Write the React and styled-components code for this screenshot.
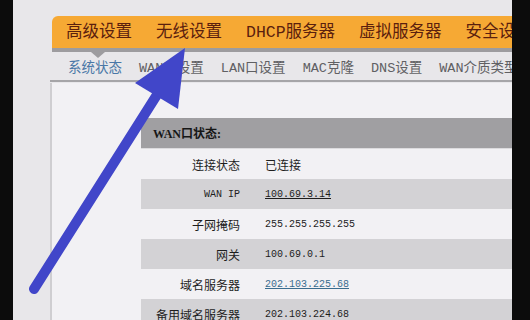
import React from "react";
import styled, { createGlobalStyle } from "styled-components";

const GlobalStyle = createGlobalStyle`
  html, body {
    margin: 0;
    padding: 0;
    background: #0c0c0c;
  }
  body {
    font-family: "Noto Sans CJK SC", "Liberation Sans", sans-serif;
  }
`;

const MONO = `"Liberation Mono", "Noto Sans CJK SC", monospace`;

const Screen = styled.div`
  position: relative;
  display: flex;
  width: 530px;
  height: 320px;
  overflow: hidden;
  background: #0c0c0c;
`;

const Bezel = styled.div`
  width: ${(p) => p.$w}px;
  flex: none;
  background: #0c0c0c;
`;

const Shell = styled.div`
  flex: 1;
  display: flex;
  flex-direction: column;
  padding: 16px 0 0 37px;
  background: #e8e7ea;
  min-width: 0;
  overflow: hidden;
`;

const NavBar = styled.div`
  flex: none;
  display: flex;
  align-items: center;
  gap: 24px;
  height: 32px;
  margin-left: 2px;
  padding-left: 14px;
  background: #f6a934;
  border-top-left-radius: 6px;
  border-bottom: 4px solid #9d9c9f;
  white-space: nowrap;
  overflow: hidden;
`;

const NavItem = styled.div`
  font-family: ${MONO};
  font-size: 16.5px;
  line-height: 32px;
  padding-top: 2px;
  color: #5a200e;
`;

const SubNav = styled.div`
  flex: none;
  position: relative;
  display: flex;
  align-items: flex-end;
  gap: 17px;
  height: 28px;
  padding-left: 18px;
  border-bottom: 2px solid #a6a5a8;
  white-space: nowrap;
  overflow: hidden;
`;

const Pointer = styled.div`
  position: absolute;
  top: 0;
  left: 41px;
  width: 0;
  height: 0;
  border-left: 7px solid transparent;
  border-right: 7px solid transparent;
  border-top: 6px solid #9d9c9f;
`;

const SubItem = styled.div`
  font-family: ${MONO};
  font-size: 13.5px;
  line-height: 20px;
  padding-bottom: 1px;
  color: ${(p) => (p.$active ? "#4a77a6" : "#606063")};
`;

const Panel = styled.div`
  flex: 1;
  margin-top: 1px;
  padding: 35px 0 0 89px;
  background: #f2f1f4;
  border-left: 2px solid #cfced1;
`;

const Table = styled.div`
  display: grid;
  grid-template-columns: 124px 1fr;
`;

const Header = styled.div`
  grid-column: 1 / 3;
  height: 30px;
  display: flex;
  align-items: center;
  padding-left: 12px;
  background: #a09fa2;
  border-bottom: 1px solid #dcdbde;
  font-family: "Liberation Serif", "Noto Sans CJK SC", serif;
  font-size: 12px;
  font-weight: 700;
  color: #161616;
`;

const Cell = styled.div`
  height: 30px;
  display: flex;
  align-items: center;
  justify-content: ${(p) => (p.$label ? "flex-end" : "flex-start")};
  padding-right: ${(p) => (p.$label ? "25px" : "0")};
  background: ${(p) => (p.$dark ? "#d3d2d5" : "#f2f1f4")};
  font-family: ${(p) => (p.$mono ? MONO : `"Noto Sans CJK SC", sans-serif`)};
  font-size: ${(p) => (p.$mono ? "10px" : "12px")};
  color: #1d1d1d;
  white-space: nowrap;
`;

const Link = styled.span`
  text-decoration: underline;
  color: ${(p) => (p.$blue ? "#3a6d8f" : "#1d1d1d")};
`;

const Arrow = styled.svg`
  position: absolute;
  left: 0;
  top: 0;
  pointer-events: none;
`;

const navItems = ["高级设置", "无线设置", "DHCP服务器", "虚拟服务器", "安全设置"];
const subItems = ["系统状态", "WAN口设置", "LAN口设置", "MAC克隆", "DNS设置", "WAN介质类型"];

const rows = [
  { label: "连接状态", value: "已连接" },
  { label: "WAN IP", value: "100.69.3.14", monoLabel: true, link: "dark" },
  { label: "子网掩码", value: "255.255.255.255" },
  { label: "网关", value: "100.69.0.1" },
  { label: "域名服务器", value: "202.103.225.68", link: "blue" },
  { label: "备用域名服务器", value: "202.103.224.68" }
];

export default function App() {
  return (
    <>
      <GlobalStyle />
      <Screen>
        <Bezel $w={13} />
        <Shell>
          <NavBar>
            {navItems.map((item) => (
              <NavItem key={item}>{item}</NavItem>
            ))}
          </NavBar>
          <SubNav>
            <Pointer />
            {subItems.map((item, i) => (
              <SubItem key={item} $active={i === 0}>
                {item}
              </SubItem>
            ))}
          </SubNav>
          <Panel>
            <Table>
              <Header>WAN口状态:</Header>
              {rows.map((row, i) => {
                const dark = i % 2 === 1;
                const mono = row.value !== "已连接";
                return (
                  <React.Fragment key={row.label}>
                    <Cell $label $dark={dark} $mono={row.monoLabel}>
                      {row.label}
                    </Cell>
                    <Cell $dark={dark} $mono={mono}>
                      {row.link ? (
                        <Link $blue={row.link === "blue"}>{row.value}</Link>
                      ) : (
                        row.value
                      )}
                    </Cell>
                  </React.Fragment>
                );
              })}
            </Table>
          </Panel>
        </Shell>
        <Bezel $w={18} />
        <Arrow width="530" height="320" viewBox="0 0 530 320">
          <line x1="34" y1="289" x2="160" y2="90" stroke="#4146c9" strokeWidth="10" strokeLinecap="round" />
          <polygon points="185,48 135,83 178,109" fill="#4146c9" />
        </Arrow>
      </Screen>
    </>
  );
}
